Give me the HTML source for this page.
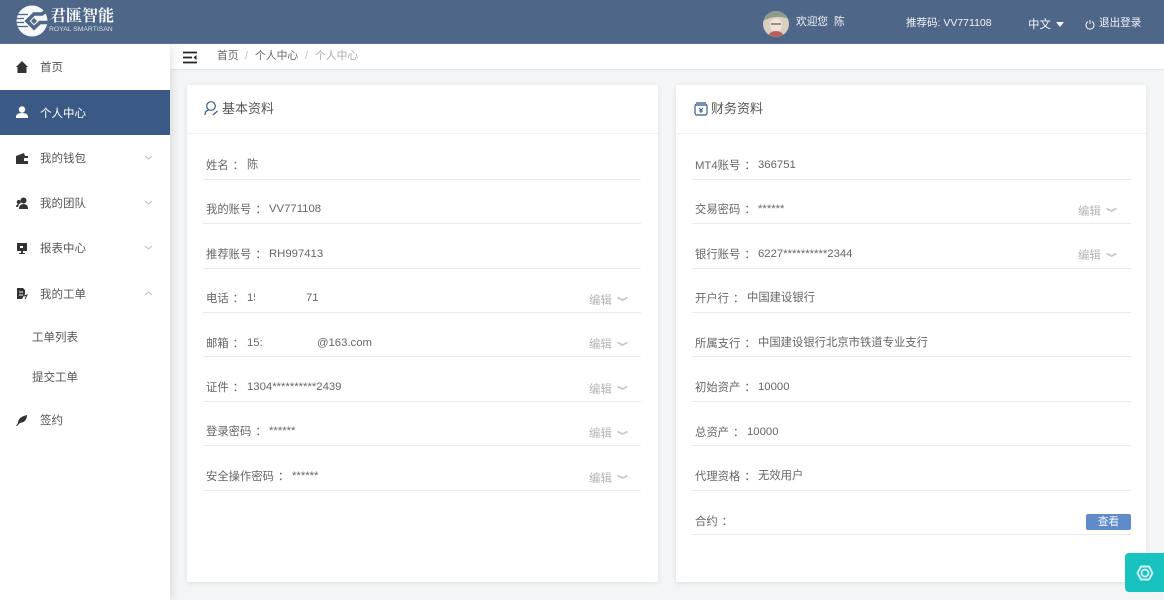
<!DOCTYPE html>
<html lang="zh"><head><meta charset="utf-8"><title>个人中心</title>
<style>
*{box-sizing:border-box}
html,body{margin:0;padding:0}
body{width:1164px;height:600px;overflow:hidden;position:relative;background:#f3f5f6}
#w{position:absolute;left:0;top:0;width:1164px;height:600px;overflow:hidden;filter:blur(.3px);font-family:"Liberation Sans","Noto Sans CJK SC",sans-serif;font-size:11.33px;color:#666}
.a{position:absolute;white-space:nowrap;line-height:16px}
#w>.a{margin-top:1px}
.c{font-family:"Noto Sans CJK TC",sans-serif;position:relative;left:4px}
#top{position:absolute;left:0;top:0;width:1164px;height:44px;background:#4e6688;border-bottom:1px solid #5d7290;z-index:3}
#top .a{color:#f2f4f7}
#side{position:absolute;left:0;top:44px;width:170px;height:556px;background:#fff;box-shadow:3px 0 8px rgba(0,0,0,.09)}
#active{position:absolute;left:0;top:90px;width:170px;height:45px;background:#3a5a85}
#crumb{position:absolute;left:170px;top:44px;width:994px;height:26px;background:#fff;border-bottom:1px solid #e4e6e8;font-size:10.8px}
.card{position:absolute;top:85px;height:497px;background:#fff;box-shadow:0 1px 5px rgba(0,0,0,.1);border-radius:2px}
.head{position:absolute;left:0;right:0;top:48px;height:1px;background:#f0f1f3}
.ln{position:absolute;height:1px;background:#e9ebee}
.nav{color:#555;font-size:11.5px}
.edit{color:#b4b4b4}
svg{position:absolute;display:block}
</style></head><body><div id="w">
<div id="top">
<svg style="left:15px;top:4px" width="34" height="34" viewBox="0 0 34 34"><circle cx="17" cy="17" r="15.500" fill="#f6f7f9"/><path d="M0 10.500h13M0 14.500h9M0 18.500h9M0 22.500h13" stroke="#4e6688" stroke-width="1.300"/><path d="M34 5 27 10H19L12 17 19 24 25 18.500H33" fill="none" stroke="#4e6688" stroke-width="3.600"/><path d="M19 14 22 17 19 20 16 17Z" fill="#4e6688"/></svg>
<div class="a" style="left:50px;top:7px;font:bold 16px/20px 'Liberation Serif','Noto Serif CJK SC',serif;color:#f4f6f8">君匯智能</div>
<div class="a" style="left:49px;top:26px;font-size:6.8px;line-height:8px;color:#d7dde6">ROYAL SMARTISAN</div>
<svg style="left:763px;top:11px" width="26" height="26" viewBox="0 0 26 26"><defs><clipPath id="av"><circle cx="13" cy="13" r="13"/></clipPath></defs><g clip-path="url(#av)"><rect width="26" height="26" fill="#d8cfc0"/><path d="M0 0H26V8Q13 3 0 10Z" fill="#8f9a8c"/><ellipse cx="13" cy="14" rx="6" ry="6.500" fill="#efe3da"/><path d="M8 13h10" stroke="#7a706a" stroke-width="1.500"/><path d="M4 26Q7 20 13 20 19 20 22 26Z" fill="#b5605c"/></g></svg>
<div class="a" style="left:796px;top:14px;font-size:10.7px">欢迎您</div>
<div class="a" style="left:834px;top:14px;font-size:10.7px">陈</div>
<div class="a" style="left:906px;top:15px;font-size:10.5px">推荐码: VV771108</div>
<div class="a" style="left:1028px;top:17px;font-size:11.5px">中文</div>
<svg style="left:1056px;top:22px" width="8" height="5" viewBox="0 0 8 5"><path d="M0 0H8L4 5Z" fill="#f2f4f7"/></svg>
<svg style="left:1085px;top:20px" width="10" height="10" viewBox="0 0 10 10"><path d="M3 1.600A4 4 0 1 0 7 1.600M5 0V4" fill="none" stroke="#f2f4f7"/></svg>
<div class="a" style="left:1099px;top:15px;font-size:10.6px">退出登录</div>
</div>

<div id="crumb"></div>
<div id="side"></div>
<div id="active"></div>
<svg style="left:16px;top:61px" width="12" height="12" viewBox="0 0 12 12"><path d="M6 0 12 6H10.500V12H1.500V6H0Z" fill="#333"/></svg>
<svg style="left:16px;top:106px" width="12" height="13" viewBox="0 0 12 13"><circle cx="6" cy="3.500" r="3.200" fill="#fff"/><path d="M0 12V10Q1 7 6 7 11 7 12 10V12Z" fill="#fff"/></svg>
<svg style="left:16px;top:153px" width="12" height="11" viewBox="0 0 12 11"><path d="M0 3 8 0 9 3H12V11H0Z" fill="#333"/><rect x="8" y="5" width="4" height="3" fill="#fff"/></svg>
<svg style="left:16px;top:197px" width="12" height="12" viewBox="0 0 12 12"><circle cx="7.500" cy="3.500" r="3" fill="#333"/><circle cx="2.800" cy="5" r="2" fill="#333"/><path d="M3 12Q3 7 7.500 7 12 7 12 12ZM0 10Q0 7 3 7L2 10Z" fill="#333"/></svg>
<svg style="left:16px;top:243px" width="12" height="12" viewBox="0 0 12 12"><path d="M1 0H11V8H7V10H9V11H3V10H5V8H1Z" fill="#333"/><rect x="4" y="3" width="3" height="2" fill="#fff"/></svg>
<svg style="left:16px;top:288px" width="12" height="12" viewBox="0 0 12 12"><path d="M1 0H7L9 2V6L6 11H1Z" fill="#333"/><path d="M3 4H7M3 7H7" stroke="#fff"/><path d="M8 8 11 7 9 11" fill="none" stroke="#333"/></svg>
<svg style="left:16px;top:415px" width="12" height="11" viewBox="0 0 12 11"><path d="M0 11 2 8Q2 2 11 0 11 7 4 8L1 11Z" fill="#333"/></svg>
<div class="a nav" style="left:40px;top:59px">首页</div>
<div class="a nav" style="left:40px;top:105px;color:#fff">个人中心</div>
<div class="a nav" style="left:40px;top:150px">我的钱包</div>
<div class="a nav" style="left:40px;top:195px">我的团队</div>
<div class="a nav" style="left:40px;top:240px">报表中心</div>
<div class="a nav" style="left:40px;top:286px">我的工单</div>
<div class="a nav" style="left:32px;top:329px">工单列表</div>
<div class="a nav" style="left:32px;top:369px">提交工单</div>
<div class="a nav" style="left:40px;top:412px">签约</div>
<svg style="left:144px;top:155px" width="9" height="5" viewBox="0 0 9 5"><path d="M1 1 4.500 4 8 1" fill="none" stroke="#bbb"/></svg>
<svg style="left:144px;top:200px" width="9" height="5" viewBox="0 0 9 5"><path d="M1 1 4.500 4 8 1" fill="none" stroke="#bbb"/></svg>
<svg style="left:144px;top:245px" width="9" height="5" viewBox="0 0 9 5"><path d="M1 1 4.500 4 8 1" fill="none" stroke="#bbb"/></svg>
<svg style="left:144px;top:291px" width="9" height="5" viewBox="0 0 9 5"><path d="M1 4 4.500 1 8 4" fill="none" stroke="#bbb"/></svg>

<svg style="left:183px;top:51px" width="14" height="13" viewBox="0 0 14 13"><path d="M0 1.500H14M0 6.500H9M0 11.500H14" stroke="#222" stroke-width="1.800"/><path d="M13.500 4V9L10.500 6.500Z" fill="#222"/></svg>
<div class="a" style="left:217px;top:47px;font-size:10.8px">首页</div>
<div class="a" style="left:245px;top:47px;color:#bbb;font-size:10.8px">/</div>
<div class="a" style="left:255px;top:47px;font-size:10.8px">个人中心</div>
<div class="a" style="left:305px;top:47px;color:#bbb;font-size:10.8px">/</div>
<div class="a" style="left:315px;top:47px;color:#aaa;font-size:10.8px">个人中心</div>

<div class="card" style="left:187px;width:471px"><div class="head"></div></div>
<div class="card" style="left:676px;width:470px"><div class="head"></div></div>
<svg style="left:204px;top:100px" width="15" height="16" viewBox="0 0 15 16"><circle cx="7" cy="6" r="4.300" fill="none" stroke="#3a5a85" stroke-width="1.200"/><path d="M1 15Q1 11 4.500 10M9 15 13.500 11" fill="none" stroke="#3a5a85" stroke-width="1.200"/></svg>
<div class="a" style="left:222px;top:100px;font-size:13px;color:#555">基本资料</div>
<svg style="left:694px;top:101px" width="14" height="15" viewBox="0 0 14 15"><rect x="1" y="3" width="12" height="11" rx="2" fill="none" stroke="#3a5a85" stroke-width="1.200"/><path d="M2 1H12V5H2Z" fill="#7a90ad"/><path d="M5 7 7 9 9 7M7 9V12M5 10H9" fill="none" stroke="#3a5a85"/></svg>
<div class="a" style="left:711px;top:100px;font-size:13px;color:#555">财务资料</div>

<div class="a" style="left:206px;top:156px">姓名<span class="c">：</span></div><div class="a" style="left:247px;top:156px">陈</div><div class="ln" style="left:203px;top:179px;width:438px"></div>
<div class="a" style="left:206px;top:200px">我的账号<span class="c">：</span></div><div class="a" style="left:269px;top:200px">VV771108</div><div class="ln" style="left:203px;top:223px;width:438px"></div>
<div class="a" style="left:206px;top:245px">推荐账号<span class="c">：</span></div><div class="a" style="left:269px;top:245px">RH997413</div><div class="ln" style="left:203px;top:268px;width:438px"></div>
<div class="a" style="left:206px;top:289px">电话<span class="c">：</span></div><div class="a" style="left:247px;top:289px">1<span style="display:inline-block;width:2px;overflow:hidden;vertical-align:bottom">5</span></div><div class="a" style="left:306px;top:289px">71</div><div class="ln" style="left:203px;top:312px;width:438px"></div>
<div class="a" style="left:206px;top:334px">邮箱<span class="c">：</span></div><div class="a" style="left:247px;top:334px">15:</div><div class="a" style="left:317px;top:334px">@163.com</div><div class="ln" style="left:203px;top:356px;width:438px"></div>
<div class="a" style="left:206px;top:378px">证件<span class="c">：</span></div><div class="a" style="left:247px;top:378px">1304**********2439</div><div class="ln" style="left:203px;top:401px;width:438px"></div>
<div class="a" style="left:206px;top:422px">登录密码<span class="c">：</span></div><div class="a" style="left:269px;top:422px">******</div><div class="ln" style="left:203px;top:445px;width:438px"></div>
<div class="a" style="left:206px;top:467px">安全操作密码<span class="c">：</span></div><div class="a" style="left:292px;top:467px">******</div><div class="ln" style="left:203px;top:490px;width:438px"></div>

<div class="a edit" style="left:589px;top:292px">编辑</div><svg style="left:616px;top:296px" width="13" height="6" viewBox="0 0 13 6"><path d="M1.500 1.500 6.500 4 11.500 1.500" fill="none" stroke="#c8c8c8" stroke-width="1.800"/></svg>
<div class="a edit" style="left:589px;top:336px">编辑</div><svg style="left:616px;top:341px" width="13" height="6" viewBox="0 0 13 6"><path d="M1.500 1.500 6.500 4 11.500 1.500" fill="none" stroke="#c8c8c8" stroke-width="1.800"/></svg>
<div class="a edit" style="left:589px;top:381px">编辑</div><svg style="left:616px;top:385px" width="13" height="6" viewBox="0 0 13 6"><path d="M1.500 1.500 6.500 4 11.500 1.500" fill="none" stroke="#c8c8c8" stroke-width="1.800"/></svg>
<div class="a edit" style="left:589px;top:425px">编辑</div><svg style="left:616px;top:430px" width="13" height="6" viewBox="0 0 13 6"><path d="M1.500 1.500 6.500 4 11.500 1.500" fill="none" stroke="#c8c8c8" stroke-width="1.800"/></svg>
<div class="a edit" style="left:589px;top:470px">编辑</div><svg style="left:616px;top:474px" width="13" height="6" viewBox="0 0 13 6"><path d="M1.500 1.500 6.500 4 11.500 1.500" fill="none" stroke="#c8c8c8" stroke-width="1.800"/></svg>

<div class="a" style="left:695px;top:156px">MT4账号<span class="c">：</span></div><div class="a" style="left:758px;top:156px">366751</div><div class="ln" style="left:692px;top:179px;width:439px"></div>
<div class="a" style="left:695px;top:200px">交易密码<span class="c">：</span></div><div class="a" style="left:758px;top:200px">******</div><div class="ln" style="left:692px;top:223px;width:439px"></div>
<div class="a" style="left:695px;top:245px">银行账号<span class="c">：</span></div><div class="a" style="left:758px;top:245px">6227**********2344</div><div class="ln" style="left:692px;top:268px;width:439px"></div>
<div class="a" style="left:695px;top:289px">开户行<span class="c">：</span></div><div class="a" style="left:747px;top:289px">中国建设银行</div><div class="ln" style="left:692px;top:312px;width:439px"></div>
<div class="a" style="left:695px;top:334px">所属支行<span class="c">：</span></div><div class="a" style="left:758px;top:334px">中国建设银行北京市铁道专业支行</div><div class="ln" style="left:692px;top:356px;width:439px"></div>
<div class="a" style="left:695px;top:378px">初始资产<span class="c">：</span></div><div class="a" style="left:758px;top:378px">10000</div><div class="ln" style="left:692px;top:401px;width:439px"></div>
<div class="a" style="left:695px;top:423px">总资产<span class="c">：</span></div><div class="a" style="left:747px;top:423px">10000</div><div class="ln" style="left:692px;top:445px;width:439px"></div>
<div class="a" style="left:695px;top:467px">代理资格<span class="c">：</span></div><div class="a" style="left:758px;top:467px">无效用户</div><div class="ln" style="left:692px;top:490px;width:439px"></div>
<div class="a" style="left:695px;top:512px">合约<span class="c">：</span></div><div class="ln" style="left:692px;top:534px;width:439px"></div>
<div class="a" style="left:1086px;top:513px;width:45px;height:16px;background:#5f8bcb;border-radius:2px;color:#f4f7fb;font-size:10.6px;text-align:center">查看</div>

<div class="a edit" style="left:1078px;top:203px">编辑</div><svg style="left:1105px;top:207px" width="13" height="6" viewBox="0 0 13 6"><path d="M1.500 1.500 6.500 4 11.500 1.500" fill="none" stroke="#c8c8c8" stroke-width="1.800"/></svg>
<div class="a edit" style="left:1078px;top:247px">编辑</div><svg style="left:1105px;top:252px" width="13" height="6" viewBox="0 0 13 6"><path d="M1.500 1.500 6.500 4 11.500 1.500" fill="none" stroke="#c8c8c8" stroke-width="1.800"/></svg>

<div style="position:absolute;left:1125px;top:553px;width:39px;height:39px;background:#17c2bf;border-radius:4px 0 0 4px"></div>
<svg style="left:1136px;top:564px" width="18" height="18" viewBox="0 0 18 18"><path d="M1.500 9 5 2.500H13L16.500 9 13 15.500H5Z" fill="none" stroke="#d4f6f5" stroke-width="1.900" stroke-linejoin="round"/><circle cx="9" cy="9" r="3.500" fill="none" stroke="#d4f6f5" stroke-width="1.700"/></svg>
</div></body></html>
